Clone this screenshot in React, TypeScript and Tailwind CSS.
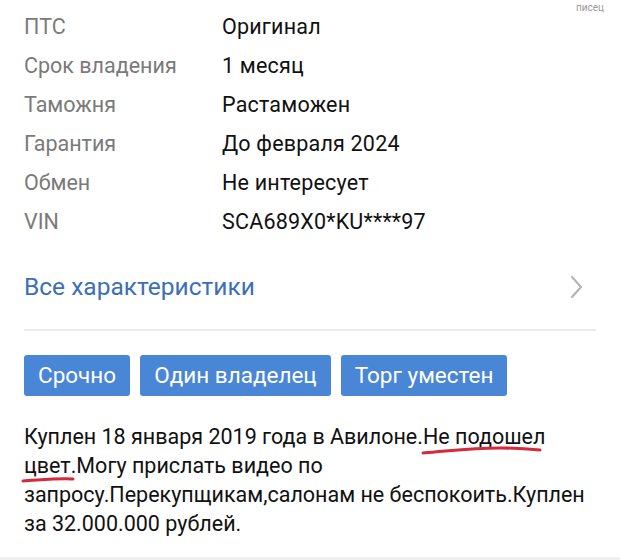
import React from "react";

const rows: [string, string][] = [
  ["ПТС", "Оригинал"],
  ["Срок владения", "1 месяц"],
  ["Таможня", "Растаможен"],
  ["Гарантия", "До февраля 2024"],
  ["Обмен", "Не интересует"],
  ["VIN", "SCA689X0*KU****97"],
];

function Mark({ children, w, d }: { children: React.ReactNode; w: number; d: string }) {
  return (
    <span className="relative">
      {children}
      <svg className="absolute left-[-3px] top-[17px] pointer-events-none" width={w} height="16" viewBox={`0 0 ${w} 16`}>
        <path d={d} fill="none" stroke="#d42a3a" strokeWidth="3" strokeLinecap="round" />
      </svg>
    </span>
  );
}

export default function App() {
  return (
    <div
      className="relative w-[620px] h-[560px] bg-white overflow-hidden"
      style={{ fontFamily: "Roboto, 'Noto Sans', sans-serif" }}
    >
      <div className="absolute right-[16px] top-[3px] text-[10px] text-[#9a9a9a] leading-none">писец</div>
      <div className="flex flex-col pl-[24px] pt-[13px]">
        {rows.map(([k, v]) => (
          <div key={k} className="flex h-[39px] items-start text-[21.5px] leading-[28px]">
            <div className="w-[198px] text-[#7a7a7a]">{k}</div>
            <div className="text-[#111] tracking-[0.2px]">{v}</div>
          </div>
        ))}
      </div>
      <div className="ml-[24px] mr-[24px] mt-[18px] flex items-center justify-between h-[44px]">
        <div className="text-[24.5px] text-[#3d6fb6]">Все характеристики</div>
        <svg width="14" height="24" viewBox="0 0 14 24" className="mr-[12px]">
          <path d="M2 2 L11 12 L2 22" fill="none" stroke="#b5b5b5" strokeWidth="2.2" strokeLinecap="round" strokeLinejoin="round" />
        </svg>
      </div>
      <div className="ml-[24px] mr-[24px] mt-[20px] h-[2px] bg-[#ececec]" />
      <div className="flex gap-[10px] ml-[24px] mt-[24px]">
        {["Срочно", "Один владелец", "Торг уместен"].map((t) => (
          <div key={t} className="h-[41px] px-[14px] flex items-center bg-[#4a86d6] rounded-[3px] text-white text-[22.5px]">
            {t}
          </div>
        ))}
      </div>
      <div className="ml-[24px] mr-[4px] mt-[26px] text-[21.5px] leading-[29px] text-[#111] whitespace-nowrap">
        Куплен 18 января 2019 года в Авилоне.
        <Mark w={124} d="M3 12 C 30 10, 50 7, 80 7 C 100 7, 110 8, 120 9">Не подошел</Mark>
        <br />
        <Mark w={56} d="M2 11 C 15 10.5, 35 8, 52 9">цвет.</Mark>
        Могу прислать видео по
        <br />
        запросу.Перекупщикам,салонам не беспокоить.Куплен
        <br />
        за 32.000.000 рублей.
      </div>
      <div className="absolute left-0 right-0 bottom-0 h-[3px] bg-[#f0f0f0]" />
    </div>
  );
}
